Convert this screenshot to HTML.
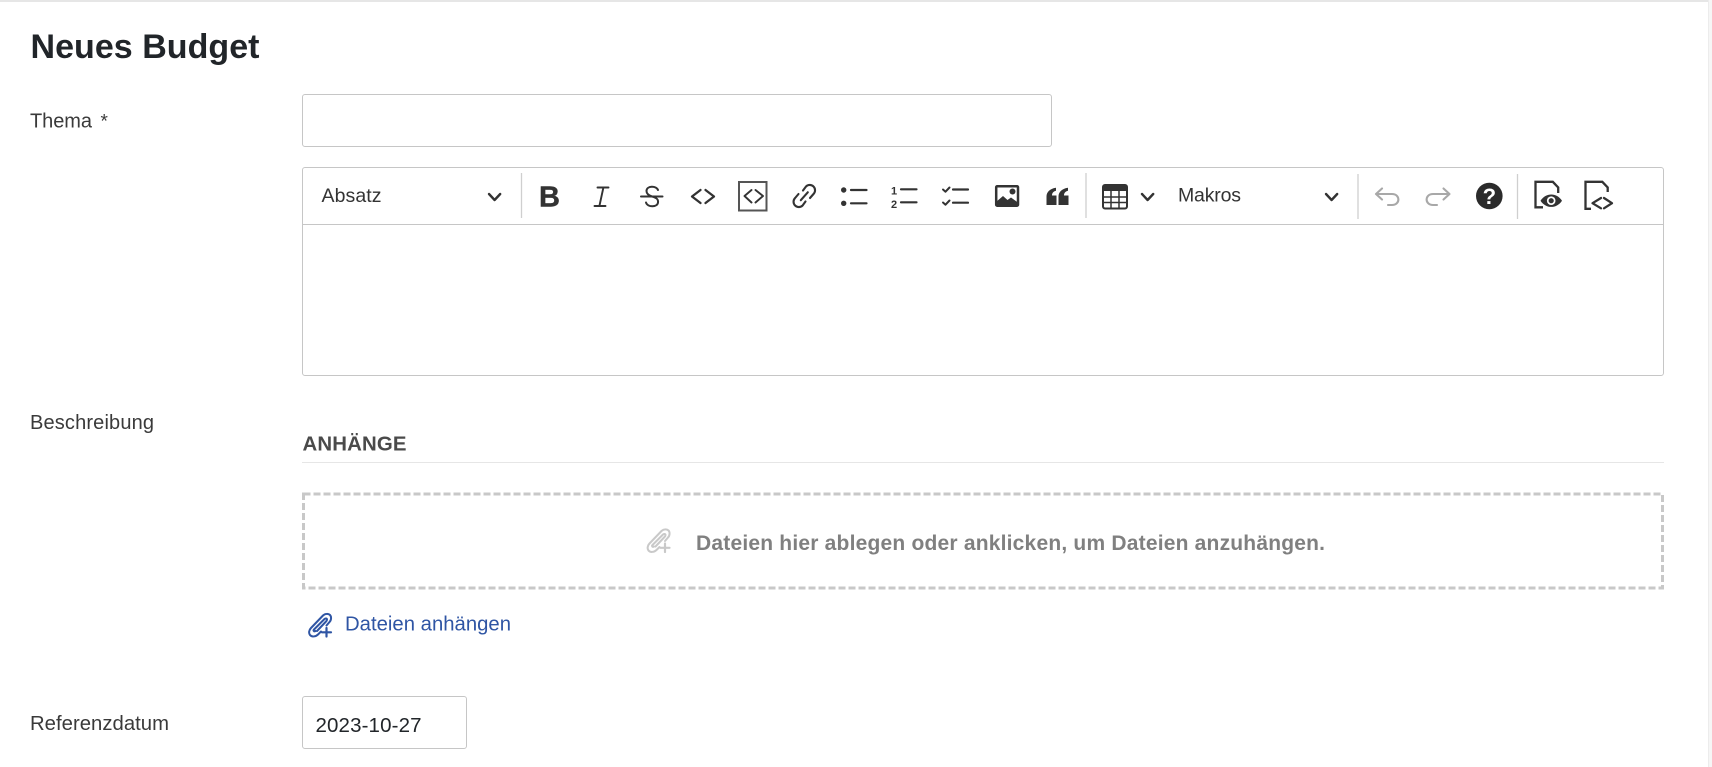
<!DOCTYPE html>
<html lang="de">
<head>
<meta charset="utf-8">
<title>Neues Budget</title>
<style>
html,body{margin:0;padding:0;background:#fff;width:1712px;height:767px;overflow:hidden}
.b{position:absolute;box-sizing:border-box;background:#fff}
svg{position:absolute;left:0;top:0}
text{font-family:"Liberation Sans",Arial,sans-serif}
</style>
</head>
<body>
<div class="b" style="left:0;top:0;width:1712px;height:2px;background:#e6e6e6"></div>
<div class="b" style="left:1708px;top:0;width:1px;height:767px;background:#ececec"></div>
<div class="b" style="left:1709px;top:0;width:3px;height:767px;background:#f6f6f6"></div>
<div class="b" style="left:302px;top:94px;width:750px;height:53px;border:1px solid #c6c6c6;border-radius:3px"></div>
<div class="b" style="left:302px;top:167px;width:1362px;height:209px;border:1px solid #c6c6c6;border-radius:3px"></div>
<div class="b" style="left:302px;top:224px;width:1362px;height:1px;background:#c6c6c6"></div>
<div class="b" style="left:302px;top:696px;width:165px;height:53px;border:1px solid #c6c6c6;border-radius:3px"></div>
<div class="b" style="left:302px;top:462px;width:1362px;height:1px;background:#e6e6e6"></div>

<svg width="1712" height="767" viewBox="0 0 1712 767" xmlns="http://www.w3.org/2000/svg">
  <!-- text -->
  <text x="30.500" y="58" font-size="34" font-weight="bold" fill="#212529" textLength="229">Neues Budget</text>
  <text x="30" y="127.500" font-size="20" fill="#3a3a3a" textLength="62">Thema</text>
  <text x="100.500" y="127.500" font-size="19" fill="#3a3a3a">*</text>
  <text x="30" y="429" font-size="20" fill="#3a3a3a" textLength="124">Beschreibung</text>
  <text x="30" y="730" font-size="20.300" fill="#3a3a3a" textLength="139">Referenzdatum</text>
  <text x="315.500" y="732" font-size="20.500" fill="#212529" textLength="106">2023-10-27</text>
  <text x="302.500" y="450.500" font-size="20.400" font-weight="bold" fill="#4a4a4a" textLength="104">ANHÄNGE</text>
  <text x="696" y="550" font-size="21" font-weight="bold" fill="#808080" textLength="629">Dateien hier ablegen oder anklicken, um Dateien anzuhängen.</text>
  <text x="345" y="630.500" font-size="20.300" fill="#2f55a4" textLength="166">Dateien anhängen</text>
  <text x="321.500" y="202" font-size="19.500" fill="#333" textLength="60">Absatz</text>
  <text x="1178" y="201.500" font-size="19.500" fill="#333" textLength="63">Makros</text>

  <!-- drop zone -->
  <rect x="303.500" y="494" width="1359" height="94" fill="none" stroke="#c8c8c8" stroke-width="3" stroke-dasharray="7 3"/>

  <!-- separators -->
  <g stroke="#cfcfcf" stroke-width="1.300">
    <path d="M521.500 173V218"/><path d="M1086 173V218"/><path d="M1358 174V219"/><path d="M1517.500 174V219"/>
  </g>

  <g fill="none" stroke="#333" stroke-linecap="round" stroke-linejoin="round">
    <!-- chevrons -->
    <path stroke-width="2.400" d="M489 194L494.600 200L500.200 194"/>
    <path stroke-width="2.400" d="M1142 194L1147.600 200L1153.200 194"/>
    <path stroke-width="2.400" d="M1326 194L1331.600 200L1337.200 194"/>
    <!-- italic -->
    <path stroke-width="1.900" d="M597.500 187.500H608.500M594.500 206H605.500M603.400 187.500L599.400 206"/>
    <!-- strike -->
    <path stroke-width="2" d="M641 196.500H662.500"/>
    <path stroke-width="2" d="M658 190C656.500 185.500 646.500 185.500 646.500 191C646.500 194 649 195.500 652 196.500C656 197.500 658.500 199 658 202.500C657.500 207.500 647.500 207.500 646 202.500"/>
    <!-- code -->
    <path stroke-width="2.300" d="M700.500 190L692 196.500L700.500 203M705.500 190L714 196.500L705.500 203"/>
    <!-- code block -->
    <rect x="739" y="182" width="27.500" height="28.500" stroke="#555" stroke-width="2" stroke-linejoin="miter"/>
    <path stroke-width="1.900" d="M751.500 190L744.500 196L751.500 202.500M755.500 190L763 196L755.500 202.500"/>
    <!-- link -->
    <path stroke-width="2.100" d="M803 190.500L806 186.500A5.300 5.300 0 0 1 813.500 194L810 198"/>
    <path stroke-width="2.100" d="M805.500 201.500L802.600 205.500A5.300 5.300 0 0 1 795.100 198L798.500 194"/>
    <path stroke-width="2.100" d="M800.800 200.200L807.800 192.300"/>
    <!-- lists -->
    <path stroke-width="2.200" d="M851 190H866.500M851 203.300H866.500"/>
    <path stroke-width="2.200" d="M901 189.300H916.500M901 202.300H916.500"/>
    <path stroke-width="2.200" d="M953 189.500H968M953 202.700H968"/>
    <path stroke-width="2" d="M943 189.500L945.500 191.700L949.500 187.500M943 202.500L945.500 204.700L949.500 200.500"/>
    <!-- table -->
    <rect x="1103" y="185" width="24" height="23.500" rx="2" stroke-width="2"/>
    <path stroke-width="1.500" stroke-linecap="butt" d="M1103 197H1127M1103 202.500H1127M1111 190V208M1119 190V208"/>
    <!-- undo / redo -->
    <path stroke="#a8a8a8" stroke-width="2.100" d="M1382 188.500L1376 194L1382 199.500M1376 194H1392C1400.500 194 1400.500 205 1392 205H1388"/>
    <path stroke="#a8a8a8" stroke-width="2.100" d="M1443.500 188.500L1449.500 194L1443.500 199.500M1449.500 194H1433C1424.500 194 1424.500 205 1433 205H1437"/>
    <!-- preview doc -->
    <path stroke-width="2.300" stroke-linecap="butt" stroke-linejoin="miter" d="M1543 207.300H1535.500V181.800H1552.800L1558.200 187.500V193"/>
    <!-- source doc -->
    <path stroke-width="2.300" stroke-linecap="butt" stroke-linejoin="miter" d="M1591 208.800H1585.500V181.800H1602.300L1607.700 187.500V192"/>
    <path stroke-width="2.300" d="M1601 198L1592.500 203.200L1601 208.300M1604 198L1612 203.200L1604 208.300"/>
    <!-- image -->
    <rect x="996.200" y="186.200" width="21.800" height="19.500" rx="1" stroke-width="2.500" fill="#fff"/>
  </g>

  <!-- filled icon parts -->
  <g fill="#333">
    <text x="549.500" y="206.500" font-size="29" font-weight="bold" text-anchor="middle" stroke="#333" stroke-width=".4">B</text>
    <circle cx="843.700" cy="190" r="2.700"/><circle cx="843.700" cy="203.300" r="2.700"/>
    <text x="894" y="194.500" font-size="11" font-weight="bold" text-anchor="middle">1</text>
    <text x="894" y="208" font-size="11" font-weight="bold" text-anchor="middle">2</text>
    <path d="M996 206V202L1003 196L1007.500 200L1011 197.500L1018.500 203V206Z"/>
    <circle cx="1012.500" cy="191.500" r="3"/>
    <path d="M1046.500 205V196.500C1046.500 192 1050 188.500 1056 187.700V190.800C1053.500 191.500 1052 193 1052 195.500H1056.500V205Z"/>
    <path d="M1058.500 205V196.500C1058.500 192 1062 188.500 1068 187.700V190.800C1065.500 191.500 1064 193 1064 195.500H1068.500V205Z"/>
    <rect x="1103" y="185" width="24" height="6" rx="1.500"/>
    <circle cx="1489.300" cy="196" r="13.300" fill="#2b2b2b"/>
    <text x="1489.300" y="204" font-size="22" font-weight="bold" fill="#fff" text-anchor="middle">?</text>
    <path d="M1540.500 200.700C1546 192.500 1556.500 192.500 1562 200.700C1556.500 209 1546 209 1540.500 200.700Z"/>
    <circle cx="1551.200" cy="200.700" r="4.300" fill="#fff"/>
    <circle cx="1551.200" cy="200.700" r="2.600"/>
  </g>

  <!-- grey attach icon -->
  <g transform="translate(647.500 528.500)" fill="none" stroke="#c9c9c9" stroke-width="2" stroke-linecap="round" stroke-linejoin="round">
    <path d="M12 18.500L9 21.500C6.500 24 2.500 24 1 22C-.5 20 0 17 2 15L14 2.500C16 .5 19.500 .5 21 2C22.500 3.500 22.500 7 20.500 9L17.500 12.500"/>
    <path d="M6.500 18C5 19 4 17.500 5 16.500L15.500 6C16.500 5 18 5.500 18 6.500C18 7.500 17.500 8 17 8.500L8 18"/>
    <path stroke-width="2.200" d="M17.500 15V23.500M13 19.300H22"/>
  </g>
  <!-- blue attach icon -->
  <g transform="translate(309 613)" fill="none" stroke="#2f55a4" stroke-width="2" stroke-linecap="round" stroke-linejoin="round">
    <path d="M12 18.500L9 21.500C6.500 24 2.500 24 1 22C-.5 20 0 17 2 15L14 2.500C16 .5 19.500 .5 21 2C22.500 3.500 22.500 7 20.500 9L17.500 12.500"/>
    <path d="M6.500 18C5 19 4 17.500 5 16.500L15.500 6C16.500 5 18 5.500 18 6.500C18 7.500 17.500 8 17 8.500L8 18"/>
    <path stroke-width="2.200" d="M17.500 15V23.500M13 19.300H22"/>
  </g>
</svg>
</body>
</html>
